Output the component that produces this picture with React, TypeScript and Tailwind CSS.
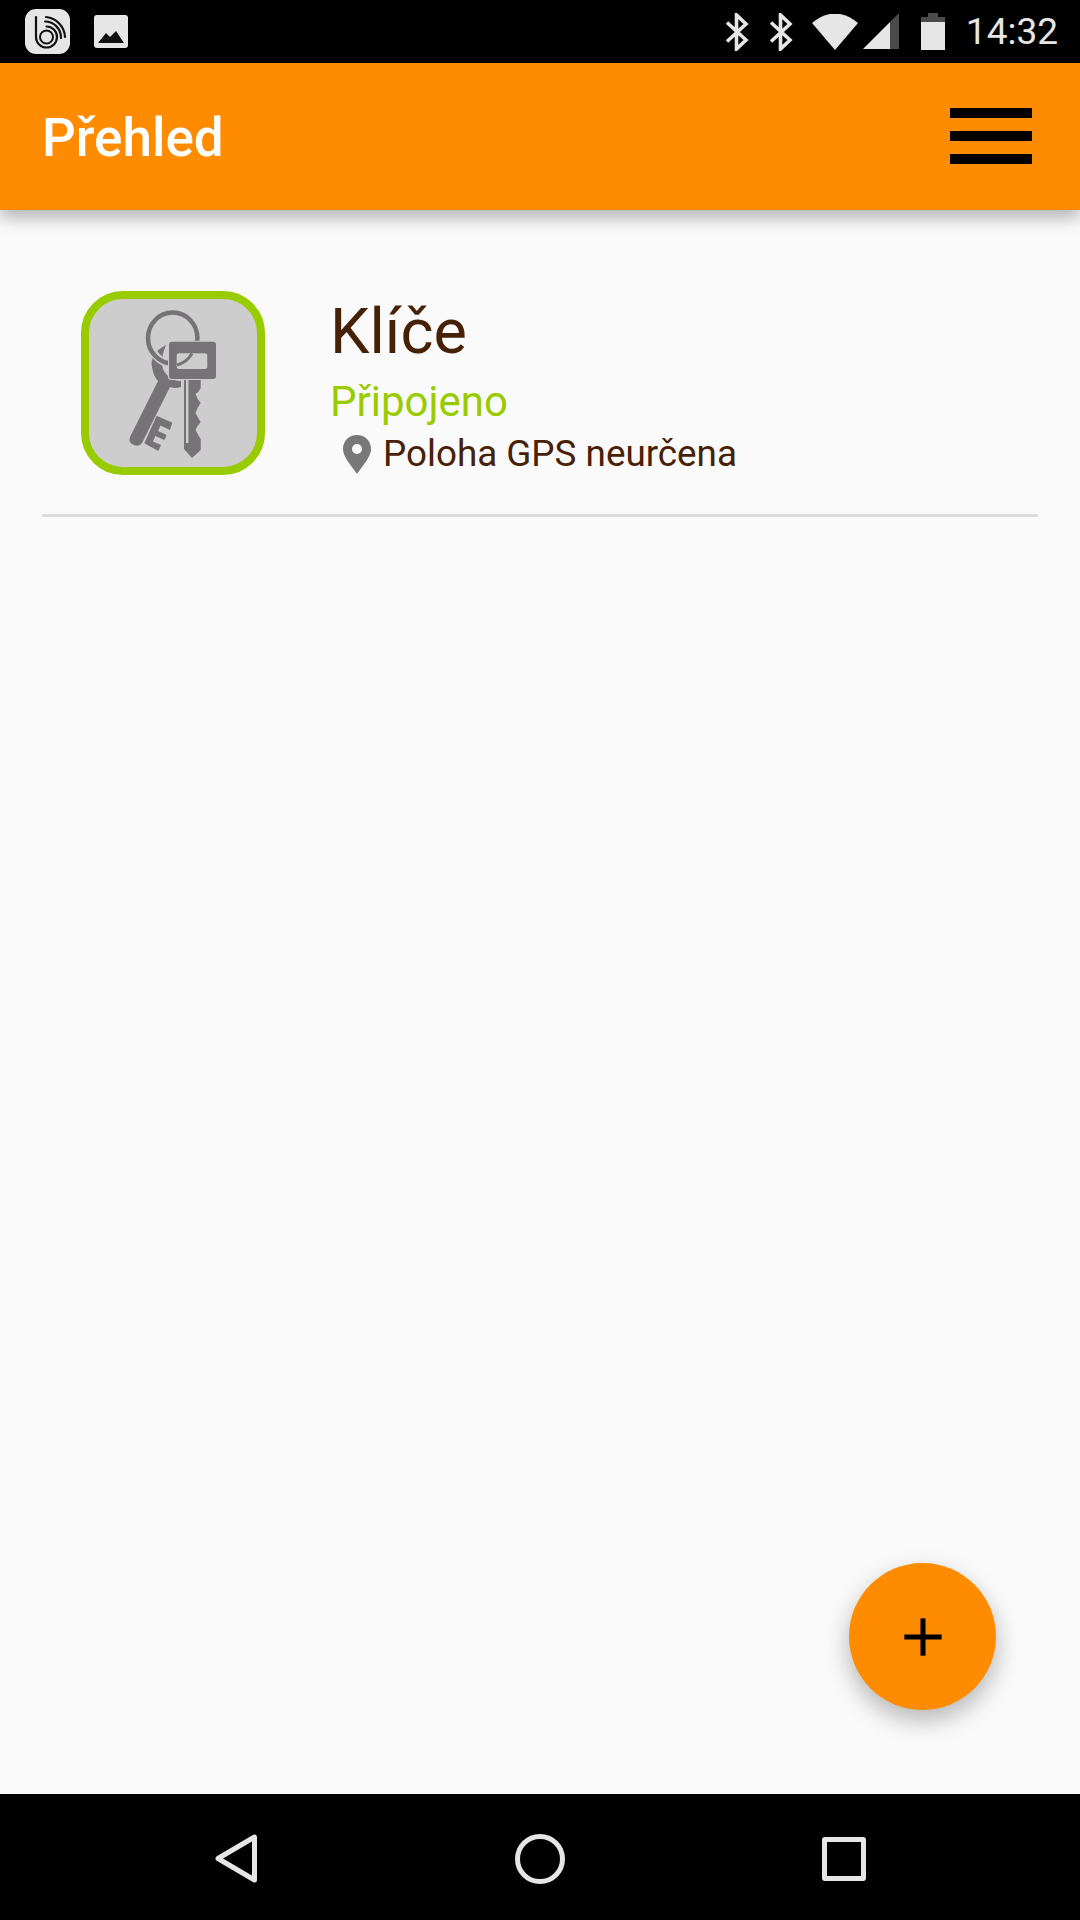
import React from 'react';
import { Plus } from 'lucide-react';

const font = "font-['Roboto',sans-serif]";

function AppLogo() {
  return (
    <div className="w-[45px] h-[45px] rounded-[11px] bg-[#e6e6e6]">
      <svg viewBox="25 9 45 45" className="w-[45px] h-[45px]" fill="none" stroke="#111" strokeLinecap="round">
        <path d="M36 17 V37 A10.5 10.5 0 1 0 46.5 26.5" strokeWidth="2.2" />
        <circle cx="46.5" cy="37" r="6.5" strokeWidth="2" />
        <path d="M45 21.5 A16 16 0 0 1 61 38" strokeWidth="2.2" />
        <path d="M46 17 A21 21 0 0 1 65 37" strokeWidth="2.2" />
      </svg>
    </div>
  );
}

function ImageTile() {
  return (
    <svg viewBox="93 14 36 36" className="w-[36px] h-[36px]">
      <rect x="94" y="15" width="34" height="33" rx="3" fill="#e6e6e6" />
      <path d="M98 43 L106 33 L110 37 L116 31 L124 43 Z" fill="#111" />
    </svg>
  );
}

function Bluetooth() {
  return (
    <svg viewBox="0 0 24 38" className="w-[24px] h-[38px]" fill="none" stroke="#e6e6e6" strokeWidth="3.6">
      <path d="M2 9.5 L21 27 L11.5 36 V2 L21 11 L2 28.5" />
    </svg>
  );
}

function StatusIcons() {
  return (
    <div className="ml-auto flex items-center pr-[22px]">
      <div className="flex items-center gap-[20px]">
        <Bluetooth />
        <Bluetooth />
      </div>
      <svg viewBox="813 13 46 36" className="w-[46px] h-[36px] ml-[19px]">
        <path d="M813 22 Q836 3 859 22 L836 49 Z" fill="#e6e6e6" />
      </svg>
      <svg viewBox="864 13 36 37" className="w-[36px] h-[37px] ml-[5px]">
        <path d="M864 49 L891 22 V49 Z" fill="#e6e6e6" />
        <path d="M891 22 L900 13 V49 H891 Z" fill="#4a4a4a" />
      </svg>
      <svg viewBox="922 12 24 37" className="w-[24px] h-[37px] ml-[22px]">
        <path d="M922 49 V19 H946 V49 Z" fill="#e6e6e6" />
        <path d="M922 21 V16 H929 V12 H939 V16 H946 V21 Z" fill="#4a4a4a" />
      </svg>
      <span className={`${font} ml-[21px] text-[37px] leading-[63px] text-[#e6e6e6]`}>14:32</span>
    </div>
  );
}

function KeysIcon() {
  return (
    <svg viewBox="123 303 100 160" className="w-[100px] h-[160px]">
      {/* bow and shaft of the slanted key */}
      <path
        d="M166 345 C156 350 150 358 152 367 C153 374 156 379 158 381 L130 437 Q128 443 134 445 Q139 447 142 443 L170 387 Q175 389 181 387 V381 Q172 381 167 375 C161 369 160 360 166 345 Z"
        fill="#757375"
      />
      <path d="M156.7 415.7 L172.3 422.7 L170 430 L160.5 425.5 L158 431 L166.7 435 L164.3 440 L155.5 436 L152.8 441.5 L161 445 L158.3 451 L144.3 443.3 Z" fill="#757375" />
      {/* ring */}
      <path d="M152 350 A24.7 25.5 0 0 0 172.7 364" fill="none" stroke="#cdcdcd" strokeWidth="8" />
      <ellipse cx="172.7" cy="338" rx="24.7" ry="25.5" fill="none" stroke="#757375" strokeWidth="4.5" />
      {/* upright key */}
      <path
        d="M184 378 H200.7 V388 Q199 392 195.5 394 Q197 399 200.7 403 Q197 408 195.5 413 Q198 418 200.7 422 Q197 426 195.5 430 Q198 435 200.7 439 V450 L192 458 L184 449 Z"
        fill="#757375"
      />
      <rect x="186" y="378" width="2.4" height="65" fill="#cdcdcd" />
      <rect x="168" y="340.7" width="49" height="39.3" rx="3" fill="#cdcdcd" />
      <path
        fillRule="evenodd"
        d="M172 341.7 H213 Q216 341.7 216 344.7 V376 Q216 379 213 379 H172 Q169 379 169 376 V344.7 Q169 341.7 172 341.7 Z M179 353.3 Q176.7 353.3 176.7 355.6 V367 Q176.7 369 179 369 H205 Q207.3 369 207.3 367 V355.6 Q207.3 353.3 205 353.3 Z"
        fill="#757375"
      />
      <path d="M192 353.5 A24.7 25.5 0 0 1 177 365" fill="none" stroke="#757375" strokeWidth="3" />
    </svg>
  );
}

function PinIcon() {
  return (
    <svg viewBox="0 0 28 39" className="w-[28px] h-[39px] shrink-0">
      <path
        fillRule="evenodd"
        d="M14 0 C6 0 0 6 0 14 C0 22 8 30 14 39 C20 30 28 22 28 14 C28 6 22 0 14 0 Z M14 9 A5 5 0 1 1 14 19 A5 5 0 1 1 14 9 Z"
        fill="#787878"
      />
    </svg>
  );
}

function DeviceRow() {
  return (
    <div className="mx-[42px] h-[307px] pt-[81px] pl-[39px] flex items-start border-b-[3px] border-[#dcdcdc]">
      <div className="w-[184px] h-[184px] rounded-[42px] border-[8px] border-[#99cc00] bg-[#cdcdcd] flex items-center justify-center shrink-0">
        <KeysIcon />
      </div>
      <div className={`${font} ml-[65px] flex flex-col`}>
        <span className="text-[63px] leading-[70px] text-[#472105] mt-[6px]">Klíče</span>
        <span className="text-[42px] leading-[48px] text-[#99cc00] mt-[11px]">Připojeno</span>
        <div className="flex items-center ml-[13px] mt-[6px]">
          <PinIcon />
          <span className="text-[36.8px] leading-[44px] text-[#472105] ml-[12px]">Poloha GPS neurčena</span>
        </div>
      </div>
    </div>
  );
}

export default function App() {
  return (
    <div className="relative w-[1080px] h-[1920px] bg-[#fafafa] flex flex-col overflow-hidden">
      <div className="h-[63px] bg-black flex items-center shrink-0">
        <div className="ml-[25px]">
          <AppLogo />
        </div>
        <div className="ml-[23px]">
          <ImageTile />
        </div>
        <StatusIcons />
      </div>

      <div className="h-[147px] bg-[#ff8c00] flex items-center justify-between pl-[42px] pr-[48px] shrink-0 shadow-[0_8px_16px_rgba(0,0,0,0.28)] z-10">
        <span className={`${font} text-[53px] font-medium text-white mt-[5px]`}>Přehled</span>
        <div className="w-[82px] flex flex-col gap-[13px] -mt-[1px]">
          <div className="h-[10px] bg-black" />
          <div className="h-[10px] bg-black" />
          <div className="h-[10px] bg-black" />
        </div>
      </div>

      <div className="flex-1">
        <DeviceRow />
      </div>

      <div className="h-[126px] bg-black flex items-center shrink-0 pt-[3px]">
        <svg viewBox="0 0 42 49" className="w-[42px] h-[49px] ml-[215px]" fill="none" stroke="#e6e6e6" strokeWidth="5" strokeLinejoin="round">
          <path d="M39.5 3 V46 L3 24.5 Z" />
        </svg>
        <div className="w-[50px] h-[50px] rounded-full border-[5px] border-[#e6e6e6] ml-[258px]" />
        <div className="w-[44px] h-[44px] rounded-[3px] border-[5px] border-[#e6e6e6] ml-[257px]" />
      </div>

      <button className="absolute left-[849px] top-[1563px] w-[147px] h-[147px] rounded-full bg-[#ff8c00] flex items-center justify-center shadow-[0_10px_24px_rgba(0,0,0,0.28)]">
        <Plus className="w-[64px] h-[64px] text-black" strokeWidth={1.9} strokeLinecap="butt" />
      </button>
    </div>
  );
}
